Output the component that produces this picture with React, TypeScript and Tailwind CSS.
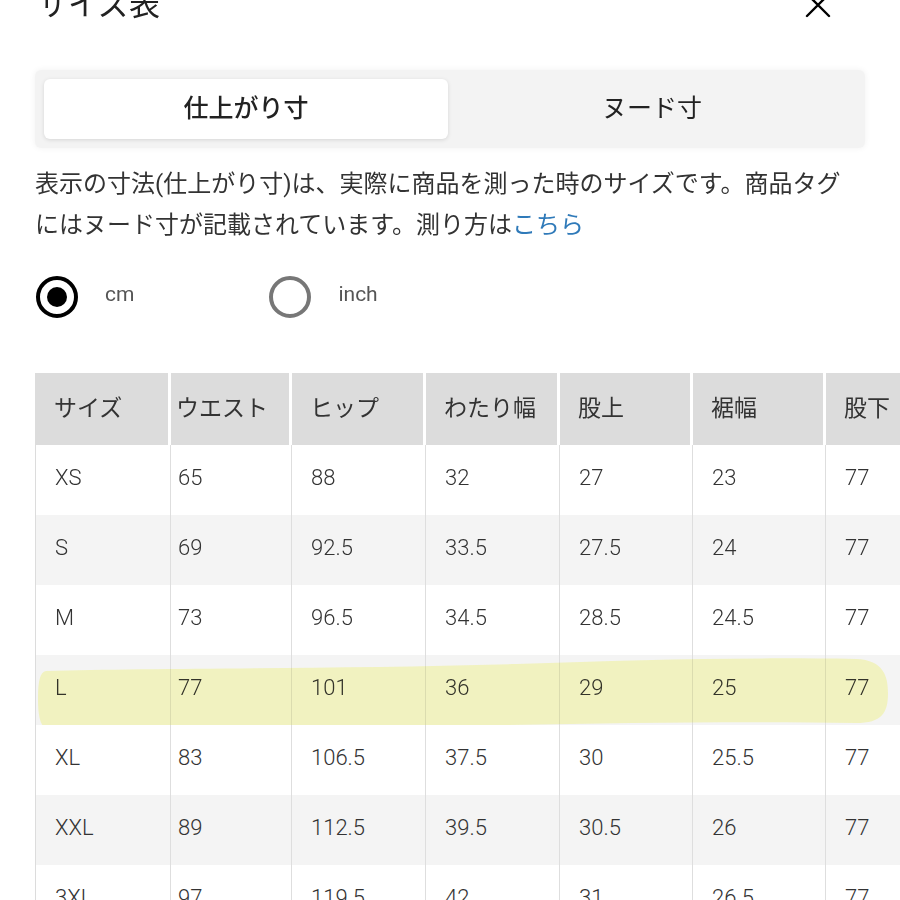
import React from "react";

const font = { fontFamily: 'Roboto, "Noto Sans CJK JP", sans-serif' };

const headers = ["サイズ", "ウエスト", "ヒップ", "わたり幅", "股上", "裾幅", "股下"];

const rows: string[][] = [
  ["XS", "65", "88", "32", "27", "23", "77"],
  ["S", "69", "92.5", "33.5", "27.5", "24", "77"],
  ["M", "73", "96.5", "34.5", "28.5", "24.5", "77"],
  ["L", "77", "101", "36", "29", "25", "77"],
  ["XL", "83", "106.5", "37.5", "30", "25.5", "77"],
  ["XXL", "89", "112.5", "39.5", "30.5", "26", "77"],
  ["3XL", "97", "119.5", "42", "31", "26.5", "77"],
];

const cols = "grid grid-cols-[135px_121px_134px_134px_133px_133px_133px]";

/* ---------- pieces ---------- */
function CloseIcon() {
  return (
    <svg width="26" height="26" viewBox="0 0 26 26" className="text-black">
      <path d="M2 2 L24 24 M24 2 L2 24" stroke="currentColor" strokeWidth="2.4" strokeLinecap="round" />
    </svg>
  );
}

function Radio({ checked, label }: { checked: boolean; label: string }) {
  return (
    <div className="flex items-center">
      <span
        className={
          checked
            ? "flex h-[42px] w-[42px] items-center justify-center rounded-full border-[4px] border-black"
            : "flex h-[42px] w-[42px] items-center justify-center rounded-full border-[4px] border-[#777]"
        }
      >
        {checked && <span className="h-[20px] w-[20px] rounded-full bg-black" />}
      </span>
      <span className="ml-[27px] -mt-[4px] text-[21px] text-[#555]">{label}</span>
    </div>
  );
}

function Highlight() {
  return (
    <svg
      className="pointer-events-none absolute left-0 top-0 mix-blend-multiply"
      width="870"
      height="80"
      viewBox="0 -8 870 80"
    >
      <path
        d="M10 8 C120 5 300 6 480 1 C600 -3 700 -6 820 -4 C848 -3 852 14 852 30 C852 50 846 60 820 60 C700 58 560 60 420 63 C260 67 120 68 14 67 C4 66 2 52 2 36 C2 18 4 9 10 8 Z"
        fill="#fafc9c"
        opacity="0.55"
      />
    </svg>
  );
}

/* ---------- table ---------- */
function SizeTable() {
  return (
    <div className="w-[1000px] border-l border-[#dcdcdc]">
      <div className={`${cols} h-[72px] bg-white`}>
        {headers.map((h, i) => (
          <div
            key={h}
            className={
              i === 1
                ? "flex items-center border-r-[3px] border-white bg-[#dcdcdc] pl-[5px] text-[23px] text-[#333]"
                : "flex items-center border-r-[3px] border-white bg-[#dcdcdc] pl-[18px] text-[23px] text-[#333]"
            }
          >
            {h}
          </div>
        ))}
      </div>
      {rows.map((r, ri) => (
        <div
          key={r[0]}
          className={
            ri % 2 === 1
              ? `${cols} relative h-[70px] bg-[#f4f4f4]`
              : `${cols} relative h-[70px] bg-white`
          }
        >
          {r.map((c, ci) => (
            <div
              key={ci}
              className={
                ci === 1
                  ? "flex items-center border-r border-[#dedede] pb-[5px] pl-[7px] text-[22px] font-light text-[#333]"
                  : "flex items-center border-r border-[#dedede] pb-[5px] pl-[19px] text-[22px] font-light text-[#333]"
              }
            >
              {c}
            </div>
          ))}
          {r[0] === "L" && <Highlight />}
        </div>
      ))}
    </div>
  );
}

export default function App() {
  return (
    <div className="h-[900px] w-[900px] overflow-hidden bg-white" style={font}>
      <div className="-mt-[16px] flex h-[42px] items-center justify-between pl-[37px] pr-[69px]">
        <span className="text-[31px] text-[#222]">サイズ表</span>
        <CloseIcon />
      </div>

      <div className="ml-[35px] mt-[44px] flex h-[78px] w-[830px] rounded-md bg-[#f3f3f3] p-[9px] shadow-[0_0_6px_rgba(0,0,0,0.06)]">
        <div className="flex w-[404px] items-center justify-center rounded-md bg-white text-[25px] font-medium text-[#222] shadow-[0_1px_4px_rgba(0,0,0,0.12)]">
          仕上がり寸
        </div>
        <div className="flex flex-1 items-center justify-center text-[25px] text-[#222]">ヌード寸</div>
      </div>

      <p className="ml-[35px] mt-[16px] w-[850px] whitespace-nowrap text-[24px] leading-[41px] text-[#333]">
        表示の寸法(仕上がり寸)は、実際に商品を測った時のサイズです。商品タグ
        <br />
        にはヌード寸が記載されています。測り方は
        <span className="text-[#2f7ab9]">こちら</span>
      </p>

      <div className="ml-[36px] mt-[30px] flex gap-[135px]">
        <Radio checked label="cm" />
        <Radio checked={false} label="inch" />
      </div>

      <div className="ml-[35px] mt-[55px]">
        <SizeTable />
      </div>
    </div>
  );
}
